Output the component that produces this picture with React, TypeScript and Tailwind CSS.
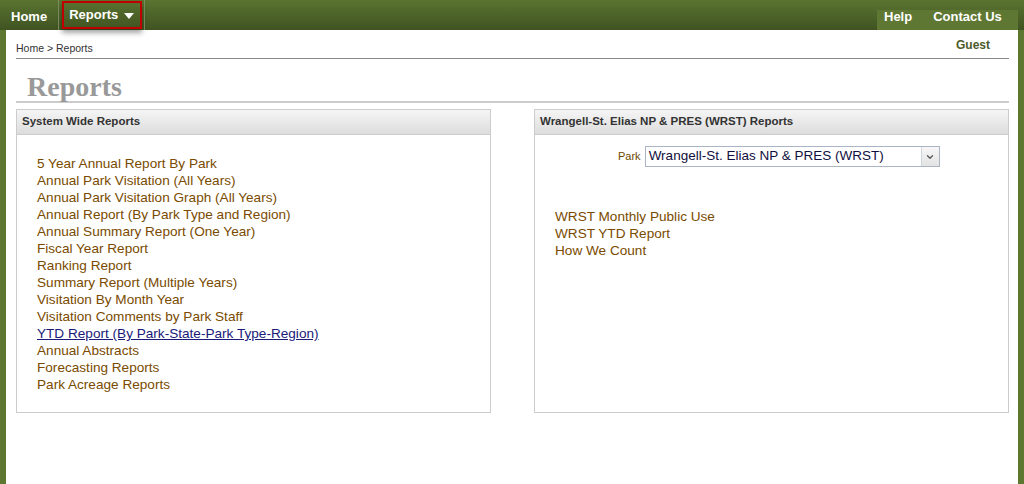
import { ChevronDown } from 'lucide-react';

const systemReports = [
  '5 Year Annual Report By Park',
  'Annual Park Visitation (All Years)',
  'Annual Park Visitation Graph (All Years)',
  'Annual Report (By Park Type and Region)',
  'Annual Summary Report (One Year)',
  'Fiscal Year Report',
  'Ranking Report',
  'Summary Report (Multiple Years)',
  'Visitation By Month Year',
  'Visitation Comments by Park Staff',
  'YTD Report (By Park-State-Park Type-Region)',
  'Annual Abstracts',
  'Forecasting Reports',
  'Park Acreage Reports',
];

const parkReports = ['WRST Monthly Public Use', 'WRST YTD Report', 'How We Count'];

const sans = "font-['Liberation_Sans',Arial,sans-serif]";

function PanelHeader({ title }: { title: string }) {
  return (
    <div className="h-[25px] flex items-center px-[5px] bg-gradient-to-b from-[#f5f5f5] to-[#dddddd] border-b border-[#cccccc]">
      <span className="text-[11.5px] font-bold text-[#333333]">{title}</span>
    </div>
  );
}

export default function App() {
  return (
    <div className={`${sans} w-full h-[484px] bg-[#5d7630] flex flex-col overflow-hidden`}>
      {/* top nav */}
      <div className="h-[30px] shrink-0 flex justify-between bg-gradient-to-b from-[#5b7431] to-[#3f5321]">
        <div className="flex items-stretch">
          <a className="px-[11px] pt-[7px] text-[13px] font-bold text-white border-r border-[#7c8d62]">Home</a>
          <div className="relative ml-[3px] mt-[1px] h-[28px] w-[80px] border-2 border-[#c00000] shadow-[0_4px_5px_rgba(0,0,0,0.35)] flex items-center pl-[5px] gap-[6px]">
            <span className="text-[13px] font-bold text-white">Reports</span>
            <svg width="10" height="6" viewBox="0 0 10 6" className="mt-[1px]">
              <path d="M0 0 H10 L5 6 Z" fill="#ffffff" />
            </svg>
          </div>
          <div className="ml-[2px] w-px bg-[#7c8d62]" />
        </div>
        <div className="relative w-[141px] mr-[6px] flex items-start pl-[7px] pt-[7px] gap-[21px]">
          <div className="absolute left-0 right-0 bottom-0 h-[20px] bg-[#5e7732]" />
          <a className="relative text-[13px] font-bold text-white">Help</a>
          <a className="relative text-[13px] font-bold text-white">Contact Us</a>
        </div>
      </div>

      {/* white content */}
      <div className="flex-1 ml-[6px] mr-[6px] bg-white pl-[10px] pr-[9px]">
        <div className="flex justify-between items-end h-[29px] border-b border-[#888888] pb-[1px]">
          <span className="text-[10.5px] text-[#333333]">Home &gt; Reports</span>
          <span className="text-[12px] font-bold text-[#4c5a2a] mr-[19px] mb-[3px]">Guest</span>
        </div>
        <div className="h-[44px] border-b-2 border-[#cccccc] pl-[11px] pt-[13px]">
          <h1 className="font-['Liberation_Serif',serif] text-[28px] leading-[30px] font-bold text-[#999999]">Reports</h1>
        </div>

        <div className="flex gap-[43px] mt-[6px]">
          <div className="w-[475px] h-[304px] border border-[#cccccc]">
            <PanelHeader title="System Wide Reports" />
            <ul className="pt-[20px] pl-[20px]">
              {systemReports.map((r) =>
                r.startsWith('YTD') ? (
                  <li key={r} className="text-[13.6px] leading-[17px] text-[#1a1a7a] underline">{r}</li>
                ) : (
                  <li key={r} className="text-[13.6px] leading-[17px] text-[#7a4b00]">{r}</li>
                )
              )}
            </ul>
          </div>

          <div className="w-[475px] h-[304px] border border-[#cccccc]">
            <PanelHeader title="Wrangell-St. Elias NP & PRES (WRST) Reports" />
            <div className="flex items-center pl-[83px] pt-[11px] gap-[4px]">
              <span className="text-[11px] text-[#6b4a00]">Park</span>
              <div className="w-[295px] h-[21px] border border-[#aab4c4] flex items-center justify-between">
                <span className="pl-[3px] text-[13.5px] text-[#101040]">Wrangell-St. Elias NP &amp; PRES (WRST)</span>
                <div className="w-[18px] h-[19px] border-l border-[#cfd6e0] bg-gradient-to-b from-[#f7f7f7] to-[#e3e3e3] flex items-center justify-center">
                  <ChevronDown size={10} strokeWidth={3} className="text-[#555555]" />
                </div>
              </div>
            </div>
            <ul className="pt-[41px] pl-[20px]">
              {parkReports.map((r) => (
                <li key={r} className="text-[13.6px] leading-[17px] text-[#7a4b00]">{r}</li>
              ))}
            </ul>
          </div>
        </div>
      </div>
    </div>
  );
}
